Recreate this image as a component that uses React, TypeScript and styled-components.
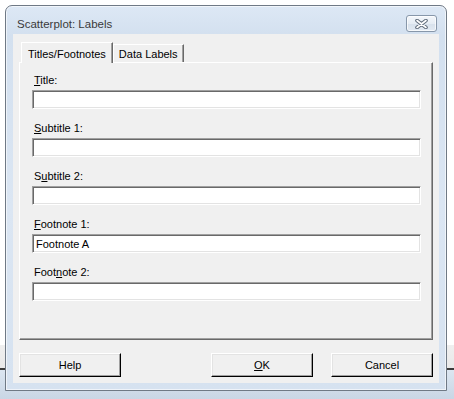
import React from 'react';
import styled, { createGlobalStyle } from 'styled-components';

const GlobalStyle = createGlobalStyle`
  html, body {
    margin: 0;
    padding: 0;
  }
  body {
    width: 454px;
    height: 399px;
    overflow: hidden;
    font-family: "Liberation Sans", Arial, sans-serif;
    font-size: 11px;
    color: #000;
    background: linear-gradient(
      to bottom,
      #ffffff 0px,
      #ffffff 345px,
      #efefef 345px,
      #e9e9e9 368px,
      #3c3c3c 368px,
      #3c3c3c 370px,
      #dce6f1 370px,
      #c9d6e5 399px
    );
  }
`;

const Desktop = styled.div`
  box-sizing: border-box;
  height: 399px;
  padding: 5px 7px 0 5px;
`;

const Window = styled.div`
  box-sizing: border-box;
  width: 442px;
  height: 386px;
  border: 1px solid #6f7985;
  border-radius: 7px 7px 0 0;
  background: linear-gradient(to bottom, #dde8f5 0px, #d3e0ef 30px, #dbe6f3 200px, #d6e2f0 100%);
  display: flex;
  flex-direction: column;
  box-shadow: 0 0 0 1px rgba(255, 255, 255, 0.6) inset;
`;

const TitleBar = styled.div`
  box-sizing: border-box;
  height: 28px;
  padding: 7px 9px 0 11px;
  display: flex;
  align-items: center;
  justify-content: space-between;
`;

const Caption = styled.span`
  font-size: 11.5px;
  color: #3a3a3a;
`;

const CloseButton = styled.div`
  box-sizing: border-box;
  width: 31px;
  height: 17px;
  border: 1px solid #8797aa;
  border-radius: 3px;
  background: linear-gradient(to bottom, #f4f7fb 0%, #e6edf5 50%, #d7e1ec 51%, #e2eaf3 100%);
  box-shadow: inset 0 0 0 1px rgba(255, 255, 255, 0.7);
  display: flex;
  align-items: center;
  justify-content: center;
`;

const Client = styled.div`
  flex: 1;
  margin: 0 7px 7px 7px;
  padding: 8px 6px 0 6px;
  background: #f0f0f0;
  display: flex;
  flex-direction: column;
`;

const TabStrip = styled.div`
  display: flex;
  align-items: flex-end;
  height: 20px;
  padding-left: 2px;
  position: relative;
  z-index: 1;
`;

const Tab = styled.div<{ $active?: boolean }>`
  box-sizing: border-box;
  height: ${(p) => (p.$active ? '21px' : '18px')};
  margin-bottom: ${(p) => (p.$active ? '-1px' : '0')};
  padding: ${(p) => (p.$active ? '2px 6px 0 6px' : '1px 5px 0 5px')};
  background: #f0f0f0;
  border-top: 1px solid #ffffff;
  border-left: 1px solid #ffffff;
  border-right: 1px solid #696969;
  box-shadow: inset -1px 0 0 #a0a0a0;
  display: flex;
  align-items: center;
  white-space: nowrap;
`;

const Panel = styled.div`
  box-sizing: border-box;
  height: 278px;
  padding: 10px 11px 0 12px;
  border-top: 1px solid #ffffff;
  border-left: 1px solid #ffffff;
  border-right: 1px solid #696969;
  border-bottom: 1px solid #696969;
  box-shadow: inset -1px -1px 0 #a0a0a0;
  display: flex;
  flex-direction: column;
  gap: 12px;
`;

const Field = styled.div`
  display: flex;
  flex-direction: column;
`;

const Label = styled.label`
  height: 14px;
  line-height: 14px;
  padding-left: 2px;
  margin-bottom: 3px;
`;

const Key = styled.span`
  text-decoration: underline;
  text-underline-offset: 1px;
`;

const TextBox = styled.div`
  box-sizing: border-box;
  height: 19px;
  padding: 0 3px;
  background: #ffffff;
  border-top: 1px solid #a0a0a0;
  border-left: 1px solid #a0a0a0;
  border-right: 1px solid #ffffff;
  border-bottom: 1px solid #ffffff;
  box-shadow: inset 1px 1px 0 #696969, inset -1px -1px 0 #e3e3e3;
  display: flex;
  align-items: center;
  line-height: 14px;
`;

const ButtonRow = styled.div`
  display: flex;
  margin-top: 13px;
`;

const Spacer = styled.div`
  flex: 1;
`;

const Button = styled.div<{ $gap?: number }>`
  box-sizing: border-box;
  width: 102px;
  height: 24px;
  margin-left: ${(p) => p.$gap || 0}px;
  background: #f0f0f0;
  border-top: 1px solid #ffffff;
  border-left: 1px solid #ffffff;
  border-right: 1px solid #000000;
  border-bottom: 1px solid #000000;
  box-shadow: inset -1px -1px 0 #a0a0a0, inset 1px 1px 0 #e3e3e3;
  display: flex;
  align-items: center;
  justify-content: center;
`;

const CloseGlyph = () => (
  <svg width="13" height="10" viewBox="0 0 13 10">
    <path d="M2 1.5 L11 8.5 M11 1.5 L2 8.5" stroke="#5f6b7a" strokeWidth="3.6" strokeLinecap="round" />
    <path d="M2 1.5 L11 8.5 M11 1.5 L2 8.5" stroke="#ffffff" strokeWidth="1.6" strokeLinecap="round" />
  </svg>
);

interface FieldDef {
  before: string;
  key: string;
  after: string;
  value?: string;
}

const fields: FieldDef[] = [
  { before: '', key: 'T', after: 'itle:' },
  { before: '', key: 'S', after: 'ubtitle 1:' },
  { before: 'S', key: 'u', after: 'btitle 2:' },
  { before: '', key: 'F', after: 'ootnote 1:', value: 'Footnote A' },
  { before: 'Foot', key: 'n', after: 'ote 2:' },
];

export default function App() {
  return (
    <>
      <GlobalStyle />
      <Desktop>
        <Window>
          <TitleBar>
            <Caption>Scatterplot: Labels</Caption>
            <CloseButton>
              <CloseGlyph />
            </CloseButton>
          </TitleBar>
          <Client>
            <TabStrip>
              <Tab $active>Titles/Footnotes</Tab>
              <Tab>Data Labels</Tab>
            </TabStrip>
            <Panel>
              {fields.map((f, i) => (
                <Field key={i}>
                  <Label>
                    {f.before}
                    <Key>{f.key}</Key>
                    {f.after}
                  </Label>
                  <TextBox>{f.value}</TextBox>
                </Field>
              ))}
            </Panel>
            <ButtonRow>
              <Button>Help</Button>
              <Spacer />
              <Button>
                <Key>O</Key>K
              </Button>
              <Button $gap={18}>Cancel</Button>
            </ButtonRow>
          </Client>
        </Window>
      </Desktop>
    </>
  );
}
